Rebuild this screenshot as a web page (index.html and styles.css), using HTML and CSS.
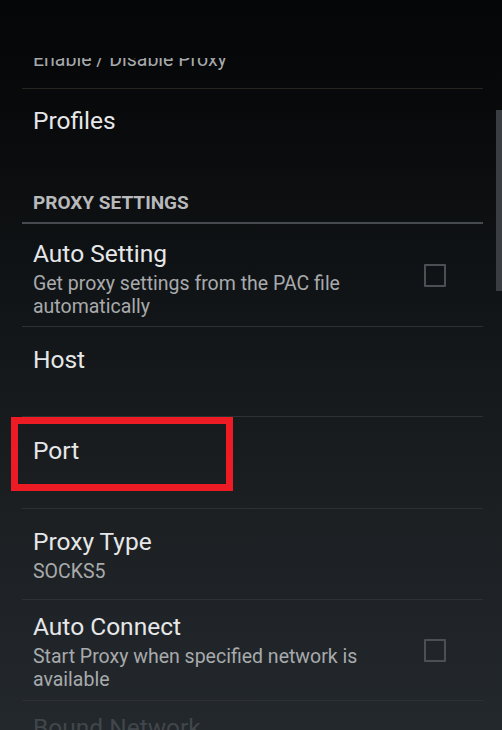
FILE: index.html
```html
<!DOCTYPE html>
<html>
<head>
<meta charset="utf-8">
<link rel="stylesheet" href="styles.css">
</head>
<body>
<div class="screen">
  <div class="list">
    <div class="row row-clipped">
      <div class="summary clipped-text">Enable / Disable Proxy</div>
    </div>
    <div class="row row-plain row-profiles">
      <div class="title">Profiles</div>
    </div>
    <div class="category">PROXY SETTINGS</div>
    <div class="row row-auto-setting">
      <div class="text">
        <div class="title">Auto Setting</div>
        <div class="summary">Get proxy settings from the PAC file automatically</div>
      </div>
      <div class="checkbox"></div>
    </div>
    <div class="row row-host">
      <div class="title">Host</div>
    </div>
    <div class="row row-port">
      <div class="title">Port</div>
    </div>
    <div class="row row-type">
      <div class="text">
        <div class="title">Proxy Type</div>
        <div class="summary">SOCKS5</div>
      </div>
    </div>
    <div class="row row-auto-connect">
      <div class="text">
        <div class="title">Auto Connect</div>
        <div class="summary">Start Proxy when specified network is available</div>
      </div>
      <div class="checkbox"></div>
    </div>
    <div class="row row-bound">
      <div class="title disabled">Bound Network</div>
    </div>
  </div>
  <div class="scrollbar"></div>
  <div class="highlight"></div>
</div>
</body>
</html>
```

FILE: styles.css
```css
* { box-sizing: border-box; }
html, body { margin: 0; padding: 0; }
body {
  width: 502px;
  height: 730px;
  overflow: hidden;
  font-family: Roboto, "Noto Sans", sans-serif;
}
.screen {
  position: relative;
  width: 502px;
  height: 730px;
  background: linear-gradient(to bottom, #050607 0%, #08090b 14%, #0f1214 35%, #171a1d 55%, #1c2023 72%, #23282d 100%);
  padding-top: 58px;
}
.list {
  height: 672px;
  overflow: hidden;
  margin: 0 19px 0 22px;
}
.row {
  display: flex;
  align-items: center;
  border-bottom: 1px solid #2d3135;
  padding-left: 11px;
  padding-right: 37px;
}
.text { flex: 1; }
.title {
  font-size: 24.5px;
  line-height: 30px;
  color: #e6e7e8;
}
.summary {
  font-size: 19.5px;
  line-height: 23px;
  color: #a8aaac;
  margin-top: 3px;
  max-width: 340px;
}
.row-clipped {
  height: 31px;
  align-items: flex-start;
  border-bottom-color: #27251f;
}
.clipped-text {
  margin-top: -10px;
}
.row-profiles {
  border-bottom: none;
  align-items: flex-start;
  padding-top: 17px;
  height: 65px;
}
.category {
  padding: 38px 0 9px 11px;
  font-size: 19px;
  line-height: 21px;
  font-weight: bold;
  color: #b7b9bb;
  border-bottom: 2px solid #474b4f;
}
.row-auto-setting { height: 103px; align-items: center; }
.row-auto-setting .text { align-self: flex-start; padding-top: 15px; }
.row-host { height: 90px; align-items: flex-start; padding-top: 18px; }
.row-port { height: 92px; align-items: flex-start; padding-top: 19px; }
.row-type { height: 91px; align-items: flex-start; padding-top: 18px; }
.row-auto-connect { height: 101px; }
.row-auto-connect .text { align-self: flex-start; padding-top: 12px; }
.row-bound { border-bottom: none; align-items: flex-start; padding-top: 12px; height: 60px; }
.disabled { color: #41464b; }
.checkbox {
  width: 22px;
  height: 23px;
  border: 2px solid #4c5054;
  border-radius: 1px;
  flex: none;
}
.scrollbar {
  position: absolute;
  left: 496px;
  top: 110px;
  width: 6px;
  height: 181px;
  background: #3a3d41;
}
.highlight {
  position: absolute;
  left: 11px;
  top: 417px;
  width: 222px;
  height: 74px;
  border: 7px solid #ed1c24;
}
```
